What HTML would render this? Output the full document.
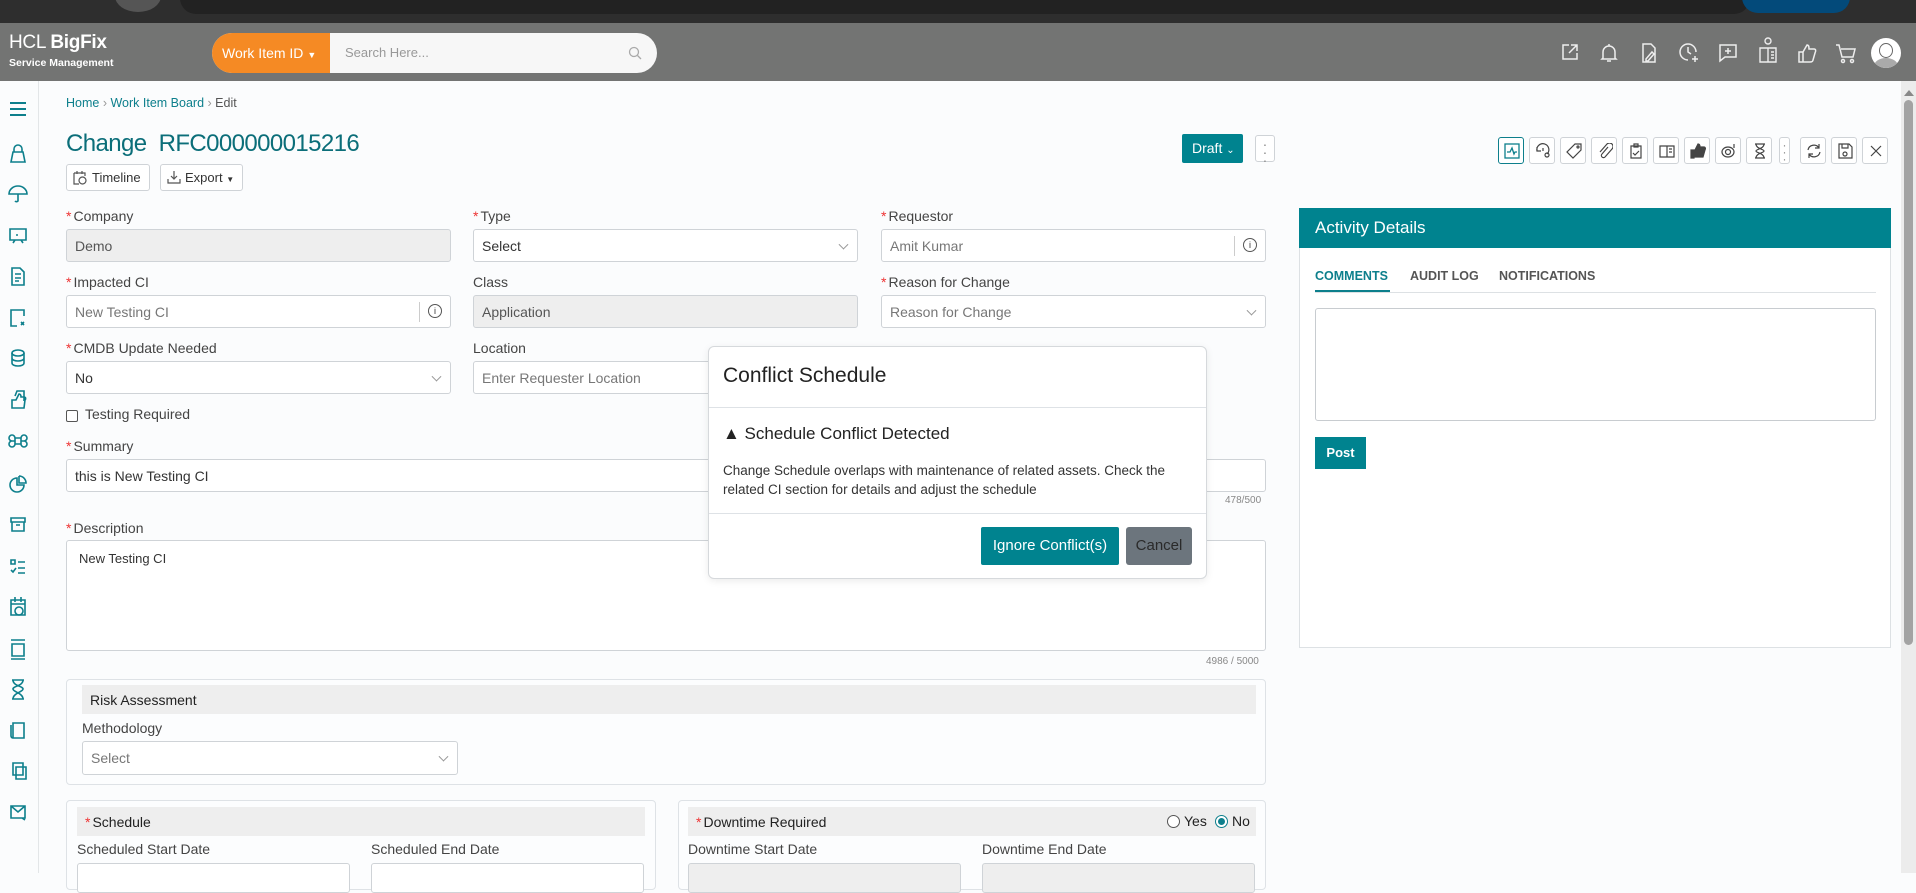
<!DOCTYPE html>
<html><head><meta charset="utf-8"><style>
*{box-sizing:border-box;margin:0;padding:0}
body{width:1916px;height:873px;overflow:hidden;background:#fbfcfd;font-family:"Liberation Sans",sans-serif;color:#333;position:relative}
.a{position:absolute}
.lbl{position:absolute;font-size:14px;color:#444;white-space:nowrap}
.lbl i{color:#e33;font-style:normal;margin-right:2px}
.inp{position:absolute;border:1px solid #cfd3d7;border-radius:3px;background:#fff;font-size:14px;color:#333;padding-left:8px;display:flex;align-items:center}
.dis{background:#eee;color:#555}
.ph{color:#777}
.chev{position:absolute;right:10px;top:50%;width:7px;height:7px;border-right:1px solid #999;border-bottom:1px solid #999;transform:translateY(-70%) rotate(45deg)}
.tb{position:absolute;top:137px;width:26px;height:27px;border:1px solid #cfd3d7;border-radius:3px;background:#fff}
.tb svg{position:absolute;left:5px;top:5px}
.sec{position:absolute;border:1px solid #dee2e6;border-radius:4px;background:#fcfdfe}
.sh{position:absolute;background:#eee;font-size:14px;color:#222;padding-left:8px;display:flex;align-items:center}
.hi{position:absolute;top:42px}
</style></head><body>
<div class="a" style="left:0;top:0;width:1916px;height:23px;background:#2e2e2e"></div>
<div class="a" style="left:115px;top:-20px;width:46px;height:32px;border-radius:50%;background:#555"></div>
<div class="a" style="left:180px;top:-20px;width:1570px;height:34px;border-radius:16px;background:#222"></div>
<div class="a" style="left:1742px;top:-20px;width:108px;height:33px;border-radius:16px;background:#034a7a"></div>
<div class="a" style="left:0;top:23px;width:1916px;height:58px;background:#737473"></div>
<div class="a" style="left:9px;top:32px;color:#fff;font-size:19px;letter-spacing:-0.3px">HCL <b>BigFix</b></div>
<div class="a" style="left:9px;top:57px;color:#fff;font-size:10.5px;font-weight:bold">Service Management</div>
<div class="a" style="left:212px;top:33px;width:445px;height:40px;border-radius:20px;background:#f7f7f7;overflow:hidden">
 <div class="a" style="left:0;top:0;width:118px;height:40px;background:#f58a24;color:#fff;font-size:14px;line-height:40px;padding-left:10px">Work Item ID <span style="font-size:9px">▼</span></div>
 <div class="a" style="left:133px;top:12px;font-size:13px;color:#999">Search Here...</div>
 <svg class="a" style="left:416px;top:13px" width="14" height="14" viewBox="0 0 14 14"><circle cx="6" cy="6" r="4.5" fill="none" stroke="#aaa" stroke-width="1.3"/><path d="M9.5 9.5L13 13" stroke="#aaa" stroke-width="1.3"/></svg>
</div>
<svg class="hi" style="left:1560px" width="20" height="20" viewBox="0 0 20 20" fill="none" stroke="#eee" stroke-width="1.5"><path d="M9 3H3v14h14v-6M11 3h6v6M17 3l-8 8"/></svg>
<svg class="hi" style="left:1599px" width="20" height="22" viewBox="0 0 20 22" fill="none" stroke="#eee" stroke-width="1.5"><path d="M4 16V10a6 6 0 0112 0v6l1 1H3zM8 19h4M10 2v2"/></svg>
<svg class="hi" style="left:1639px" width="20" height="22" viewBox="0 0 20 22" fill="none" stroke="#eee" stroke-width="1.5"><path d="M4 2h8l4 4v14H4zM7 17l6-7 2 2-6 7H7z"/></svg>
<svg class="hi" style="left:1678px" width="22" height="22" viewBox="0 0 22 22" fill="none" stroke="#eee" stroke-width="1.5"><path d="M18 10a8 8 0 10-8 8M10 5v5l3 2M17 14v6M14 17h6"/></svg>
<svg class="hi" style="left:1717px" width="22" height="22" viewBox="0 0 22 22" fill="none" stroke="#eee" stroke-width="1.5"><path d="M3 3h16v12H8l-5 4zM11 6v6M8 9h6"/></svg>
<svg class="a" style="left:1757px;top:36px" width="22" height="28" viewBox="0 0 22 28" fill="none" stroke="#eee" stroke-width="1.4"><circle cx="11" cy="5" r="3"/><path d="M3 12h8v14H3zM11 12h8v14h-8zM14 16h3M14 19h3M14 22h3"/></svg>
<svg class="hi" style="left:1796px" width="22" height="22" viewBox="0 0 22 22" fill="none" stroke="#eee" stroke-width="1.5"><path d="M3 10h4v10H3zM7 10l4-7c2 0 2 2 2 4h5c2 0 2 2 1 4l-2 7c0 1-1 2-3 2H7"/></svg>
<svg class="hi" style="left:1835px" width="22" height="22" viewBox="0 0 22 22" fill="none" stroke="#eee" stroke-width="1.5"><path d="M1 3h3l3 12h11l2-8H6"/><circle cx="8" cy="19" r="1.5"/><circle cx="17" cy="19" r="1.5"/></svg>
<div class="a" style="left:1871px;top:38px;width:30px;height:30px;border-radius:50%;background:#fff;overflow:hidden"><div class="a" style="left:8px;top:5px;width:14px;height:15px;border-radius:50%;border:1.5px solid #666;background:#fff"></div><div class="a" style="left:3px;top:20px;width:24px;height:16px;border-radius:50%;background:#aaa"></div></div>
<!-- sidebar -->
<div class="a" style="left:0;top:81px;width:39px;height:792px;background:#fbfcfd;border-right:1px solid #e3e6e8"></div>
<svg class="a" style="left:0;top:0" width="39" height="873" fill="none" stroke="#0d7f8c" stroke-width="1.6">
 <path d="M10 103h16M10 109h16M10 115h16" stroke-width="2"/>
 <g transform="translate(0,154)"><path d="M11 8h14l-2-10H13zM14-2v-3a4 4 0 018 0v3"/></g>
 <g transform="translate(0,194)"><path d="M9 0a9 8 0 0118 0zM18 0v7a2 2 0 01-3 0"/></g>
 <g transform="translate(0,236)"><path d="M10-7h16v11H10zM15 4l-2 3M21 4l2 3M16-1h2"/></g>
 <g transform="translate(0,276)"><path d="M12-8h8l4 4v13H12zM15-2h6M15 2h6M15 5h4"/></g>
 <g transform="translate(0,318)"><path d="M24-2v-6H11v16h6M21 4l3 3M24 4l-3 3"/></g>
 <g transform="translate(0,358)"><ellipse cx="18" cy="-5" rx="6" ry="3"/><path d="M12-5V5c0 4 12 4 12 0V-5M12 0c0 4 12 4 12 0"/></g>
 <g transform="translate(0,400)"><path d="M12 8V0h4l3-6c2 0 2 2 2 3h3c2 0 2 2 1 3l-1 8zM15-4l2-5h7v10"/></g>
 <g transform="translate(0,441)"><path d="M15-3h6v6h-6zM15-3a3 3 0 10-3 3h3M21-3a3 3 0 113 3h-3M15 3a3 3 0 11-3-3M21 3a3 3 0 103-3"/></g>
 <g transform="translate(0,484)"><path d="M17-6a7 7 0 107 7h-7zM19-8v7h7a7 7 0 00-7-7"/></g>
 <g transform="translate(0,525)"><path d="M11-7h14v4H11zM12-3v9h12v-9M16 0h4"/></g>
 <g transform="translate(0,567)"><path d="M11-7h4v4h-4zM18-5h7M18 1h7M18 6h7M11 3l2 2 3-4"/></g>
 <g transform="translate(0,607)"><path d="M11-7h14v15H11zM11-3h14M15-10v5M21-10v5"/><circle cx="19" cy="4" r="4"/></g>
 <g transform="translate(0,649)"><path d="M11-9h14M11 10h14M12-5h12v12H12z"/></g>
 <g transform="translate(0,689)"><path d="M12-9h12M12 10h12M13-9c0 6 10 6 10 9s-10 4-10 10M23-9c0 6-10 6-10 9s10 4 10 10"/></g>
 <g transform="translate(0,731)"><path d="M13-8h11v15H13zM13 7a2 2 0 01-2-2V-6"/></g>
 <g transform="translate(0,771)"><path d="M13-8h10v12H13zM16-4h10v12H16z"/></g>
 <g transform="translate(0,813)"><path d="M11-7h14v12H11zM11-7l7 6 7-6M22 5l3 2"/></g>
</svg>
<div class="a" style="left:66px;top:96px;font-size:12.5px;color:#0d7f8c">Home <span style="color:#999">›</span> Work Item Board <span style="color:#999">›</span> <span style="color:#555">Edit</span></div>
<div class="a" style="left:66px;top:130px;font-size:24px;color:#0b6e79;letter-spacing:-0.6px">Change&nbsp; RFC000000015216</div>
<div class="a" style="left:66px;top:164px;width:84px;height:27px;border:1px solid #cfd3d7;border-radius:3px;background:#fff;font-size:13px;line-height:25px;padding-left:25px">Timeline</div>
<svg class="a" style="left:73px;top:170px" width="14" height="15" fill="none" stroke="#555" stroke-width="1.2"><path d="M1 3h11v3M1 3v11h5M4 1v3M9 1v3"/><circle cx="9.5" cy="10.5" r="3.5"/></svg>
<div class="a" style="left:160px;top:164px;width:83px;height:27px;border:1px solid #cfd3d7;border-radius:3px;background:#fff;font-size:13px;line-height:25px;padding-left:24px">Export <span style="font-size:8px">▼</span></div>
<svg class="a" style="left:167px;top:170px" width="14" height="14" fill="none" stroke="#555" stroke-width="1.2"><path d="M7 1v8M4 6l3 3 3-3M1 9v4h12V9"/></svg>
<div class="a" style="left:1182px;top:134px;width:61px;height:29px;background:#00838f;border-radius:2px;color:#fff;font-size:14px;line-height:29px;padding-left:10px">Draft <span style="font-size:10px">⌄</span></div>
<div class="a" style="left:1255px;top:135px;width:20px;height:27px;border:1px solid #cfd3d7;border-radius:3px;background:#fff;font-size:14px;color:#888;text-align:center;line-height:8px;padding-top:4px">·<br>·<br>·</div>
<div class="tb" style="left:1498px;border-color:#0d7f8c"><svg width="16" height="16" fill="none" stroke="#0d7f8c" stroke-width="1.3"><rect x="1" y="1" width="14" height="14"/><path d="M3 9h3l2-4 2 6 1-2h2"/></svg></div>
<div class="tb" style="left:1529px"><svg width="16" height="16" fill="none" stroke="#444" stroke-width="1.2"><path d="M2 8a6 6 0 1110 3M2 4v4h4M8 5v3"/><circle cx="12" cy="12" r="2"/></svg></div>
<div class="tb" style="left:1560px"><svg width="16" height="16" fill="none" stroke="#444" stroke-width="1.2"><path d="M9 1h6v6l-8 8-6-6z"/><circle cx="12" cy="4" r="1"/></svg></div>
<div class="tb" style="left:1591px"><svg width="16" height="16" fill="none" stroke="#444" stroke-width="1.2"><path d="M11 4l-6 7a2 2 0 003 3l7-8a3.5 3.5 0 00-5-5L3 9"/></svg></div>
<div class="tb" style="left:1622px"><svg width="16" height="16" fill="none" stroke="#444" stroke-width="1.2"><path d="M3 3h10v12H3zM6 1h4v3H6zM5 10l2 2 4-4"/></svg></div>
<div class="tb" style="left:1653px"><svg width="16" height="16" fill="none" stroke="#444" stroke-width="1.2"><path d="M1 3h7v11H1zM8 3h7v11H8zM10 6h3M10 9h3"/></svg></div>
<div class="tb" style="left:1684px"><svg width="16" height="16" fill="#444" stroke="#444" stroke-width="1.2"><path d="M1 7h3v8H1zM5 7l3-6c2 0 2 2 2 3h4c1 0 2 1 1 3l-2 7H5z"/></svg></div>
<div class="tb" style="left:1715px"><svg width="16" height="16" fill="none" stroke="#444" stroke-width="1.2"><ellipse cx="7" cy="9" rx="6" ry="5"/><circle cx="7" cy="9" r="2.5"/><path d="M13 1v4"/></svg></div>
<div class="tb" style="left:1746px"><svg width="16" height="16" fill="none" stroke="#444" stroke-width="1.2"><path d="M3 1h10M3 15h10M4 1c0 5 8 5 8 7s-8 2-8 7M12 1c0 5-8 5-8 7s8 2 8 7"/></svg></div>
<div class="a" style="left:1779px;top:137px;width:11px;height:27px;border:1px solid #cfd3d7;border-radius:3px;background:#fff;font-size:12px;color:#888;text-align:center;line-height:7px;padding-top:4px">·<br>·<br>·</div>
<div class="tb" style="left:1800px"><svg width="16" height="16" fill="none" stroke="#444" stroke-width="1.2"><path d="M2 7a6 6 0 0111-2M14 9a6 6 0 01-11 2M13 1v4h-4M3 15v-4h4"/></svg></div>
<div class="tb" style="left:1831px"><svg width="16" height="16" fill="none" stroke="#444" stroke-width="1.2"><path d="M2 1h10l3 3v11H2zM5 1v4h6V1"/><circle cx="8" cy="11" r="2"/></svg></div>
<div class="tb" style="left:1862px"><svg width="16" height="16" fill="none" stroke="#444" stroke-width="1.2"><path d="M3 3l10 10M13 3L3 13"/></svg></div>
<div class="lbl" style="left:66px;top:208px"><i>*</i>Company</div>
<div class="inp dis" style="left:66px;top:229px;width:385px;height:33px">Demo</div>
<div class="lbl" style="left:473px;top:208px"><i>*</i>Type</div>
<div class="inp" style="left:473px;top:229px;width:385px;height:33px">Select<span class="chev"></span></div>
<div class="lbl" style="left:881px;top:208px"><i>*</i>Requestor</div>
<div class="inp ph" style="left:881px;top:229px;width:385px;height:33px">Amit Kumar<span class="a" style="right:30px;top:6px;height:20px;border-left:1px solid #ccc"></span><span class="a" style="right:8px;top:8px;width:14px;height:14px;border:1px solid #555;border-radius:50%;font-size:9px;line-height:12px;text-align:center;color:#333">i</span></div>
<div class="lbl" style="left:66px;top:274px"><i>*</i>Impacted CI</div>
<div class="inp ph" style="left:66px;top:295px;width:385px;height:33px">New Testing CI<span class="a" style="right:30px;top:6px;height:20px;border-left:1px solid #ccc"></span><span class="a" style="right:8px;top:8px;width:14px;height:14px;border:1px solid #555;border-radius:50%;font-size:9px;line-height:12px;text-align:center;color:#333">i</span></div>
<div class="lbl" style="left:473px;top:274px">Class</div>
<div class="inp dis" style="left:473px;top:295px;width:385px;height:33px">Application</div>
<div class="lbl" style="left:881px;top:274px"><i>*</i>Reason for Change</div>
<div class="inp ph" style="left:881px;top:295px;width:385px;height:33px">Reason for Change<span class="chev"></span></div>
<div class="lbl" style="left:66px;top:340px"><i>*</i>CMDB Update Needed</div>
<div class="inp" style="left:66px;top:361px;width:385px;height:33px">No<span class="chev"></span></div>
<div class="lbl" style="left:473px;top:340px">Location</div>
<div class="inp ph" style="left:473px;top:361px;width:385px;height:33px">Enter Requester Location</div>
<div class="a" style="left:66px;top:410px;width:12px;height:12px;border:1px solid #555;border-radius:2px;background:#fff"></div>
<div class="lbl" style="left:85px;top:406px">Testing Required</div>
<div class="lbl" style="left:66px;top:438px"><i>*</i>Summary</div>
<div class="inp" style="left:66px;top:459px;width:1200px;height:33px">this is New Testing CI</div>
<div class="a" style="left:1225px;top:495px;font-size:10px;color:#888">478/500</div>
<div class="lbl" style="left:66px;top:520px"><i>*</i>Description</div>
<div class="inp" style="left:66px;top:540px;width:1200px;height:111px;align-items:flex-start;padding:10px 12px;font-size:13px">New Testing CI</div>
<div class="a" style="left:1206px;top:656px;font-size:10px;color:#888">4986 / 5000</div>
<div class="sec" style="left:66px;top:679px;width:1200px;height:106px"></div>
<div class="sh" style="left:82px;top:685px;width:1174px;height:29px">Risk Assessment</div>
<div class="lbl" style="left:82px;top:720px">Methodology</div>
<div class="inp ph" style="left:82px;top:741px;width:376px;height:34px">Select<span class="chev"></span></div>
<div class="sec" style="left:66px;top:800px;width:590px;height:90px"></div>
<div class="sh" style="left:77px;top:807px;width:568px;height:29px"><span style="color:#e33;margin-right:2px">*</span>Schedule</div>
<div class="lbl" style="left:77px;top:841px">Scheduled Start Date</div>
<div class="lbl" style="left:371px;top:841px">Scheduled End Date</div>
<div class="inp" style="left:77px;top:863px;width:273px;height:30px"></div>
<div class="inp" style="left:371px;top:863px;width:273px;height:30px"></div>
<div class="sec" style="left:678px;top:800px;width:588px;height:90px"></div>
<div class="sh" style="left:688px;top:807px;width:568px;height:29px"><span style="color:#e33;margin-right:2px">*</span>Downtime Required</div>
<div class="a" style="left:1167px;top:815px;width:13px;height:13px;border:1px solid #555;border-radius:50%;background:#fff"></div>
<div class="lbl" style="left:1184px;top:813px;color:#222">Yes</div>
<div class="a" style="left:1215px;top:815px;width:13px;height:13px;border:1px solid #0d7f8c;border-radius:50%;background:#fff"><div class="a" style="left:2px;top:2px;width:7px;height:7px;border-radius:50%;background:#0d7f8c"></div></div>
<div class="lbl" style="left:1232px;top:813px;color:#222">No</div>
<div class="lbl" style="left:688px;top:841px">Downtime Start Date</div>
<div class="lbl" style="left:982px;top:841px">Downtime End Date</div>
<div class="inp dis" style="left:688px;top:863px;width:273px;height:30px"></div>
<div class="inp dis" style="left:982px;top:863px;width:273px;height:30px"></div>
<div class="a" style="left:1299px;top:208px;width:592px;height:440px;border:1px solid #dde1e4;background:#fff"></div>
<div class="a" style="left:1299px;top:208px;width:592px;height:40px;background:#00838f;color:#fff;font-size:17px;line-height:40px;padding-left:16px">Activity Details</div>
<div class="a" style="left:1315px;top:269px;font-size:12.5px;font-weight:bold;color:#0d7f8c">COMMENTS</div>
<div class="a" style="left:1410px;top:269px;font-size:12.5px;font-weight:bold;color:#555">AUDIT LOG</div>
<div class="a" style="left:1499px;top:269px;font-size:12.5px;font-weight:bold;color:#555">NOTIFICATIONS</div>
<div class="a" style="left:1315px;top:292px;width:561px;height:1px;background:#dde1e4"></div>
<div class="a" style="left:1315px;top:290px;width:75px;height:2px;background:#0d7f8c"></div>
<div class="a" style="left:1315px;top:308px;width:561px;height:113px;border:1px solid #c8ccd0;border-radius:3px;background:#fff"></div>
<div class="a" style="left:1315px;top:437px;width:51px;height:32px;background:#00838f;color:#fff;font-size:13px;font-weight:bold;line-height:32px;text-align:center">Post</div>
<div class="a" style="left:1901px;top:81px;width:15px;height:792px;background:#ececec"></div>
<div class="a" style="left:1904px;top:90px;width:0;height:0;border-left:5px solid transparent;border-right:5px solid transparent;border-bottom:6px solid #888"></div>
<div class="a" style="left:1904px;top:100px;width:9px;height:545px;border-radius:5px;background:#a3a3a3"></div>
<div class="a" style="left:708px;top:346px;width:499px;height:233px;background:#fff;border:1px solid #d6d9dc;border-radius:6px;box-shadow:0 2px 8px rgba(0,0,0,.08)">
 <div class="a" style="left:14px;top:17px;font-size:21px;color:#222">Conflict Schedule</div>
 <div class="a" style="left:0;top:60px;width:497px;height:1px;background:#dee2e6"></div>
 <div class="a" style="left:14px;top:77px;font-size:17px;color:#222">▲ Schedule Conflict Detected</div>
 <div class="a" style="left:14px;top:114px;width:475px;font-size:13.5px;line-height:19px;color:#333">Change Schedule overlaps with maintenance of related assets. Check the related CI section for details and adjust the schedule</div>
 <div class="a" style="left:0;top:166px;width:497px;height:1px;background:#dee2e6"></div>
 <div class="a" style="left:272px;top:180px;width:138px;height:38px;background:#00838f;color:#fff;font-size:15px;line-height:38px;text-align:center;border-radius:2px">Ignore Conflict(s)</div>
 <div class="a" style="left:417px;top:180px;width:66px;height:38px;background:#6c757d;color:#2a2a2a;font-size:15px;line-height:38px;text-align:center;border-radius:3px">Cancel</div>
</div>
</body></html>
